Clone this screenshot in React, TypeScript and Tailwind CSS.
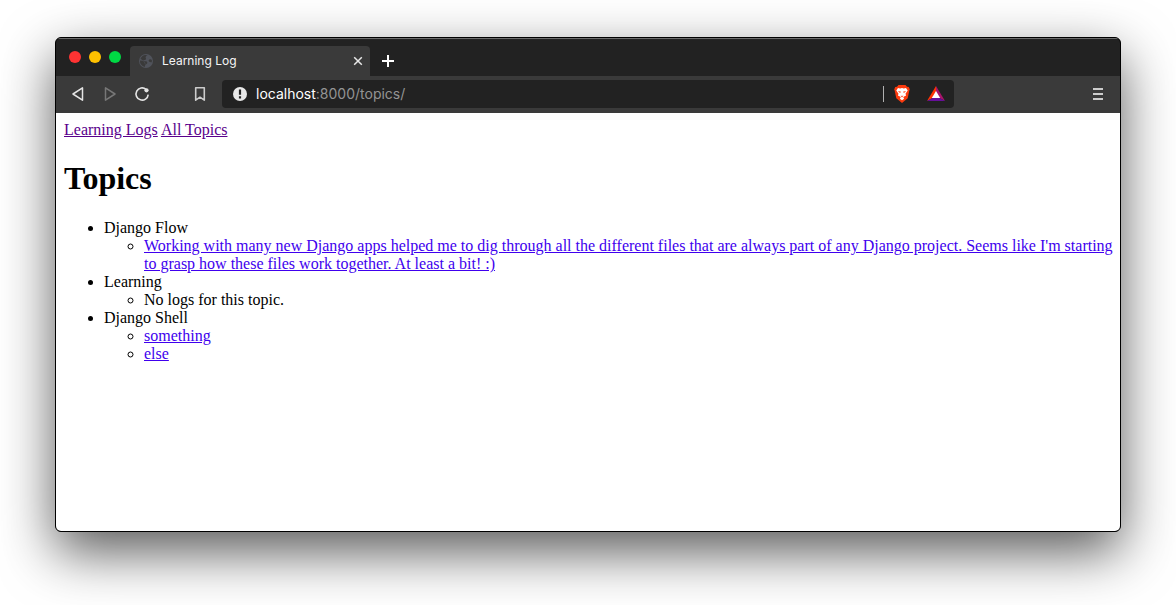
import type { ReactNode } from "react";

type Entry = { text: string; href?: string };
type Topic = { name: string; entries: Entry[] };

const topics: Topic[] = [
  {
    name: "Django Flow",
    entries: [
      {
        text: "Working with many new Django apps helped me to dig through all the different files that are always part of any Django project. Seems like I'm starting to grasp how these files work together. At least a bit! :)",
        href: "#entry-1",
      },
    ],
  },
  { name: "Learning", entries: [{ text: "No logs for this topic." }] },
  {
    name: "Django Shell",
    entries: [
      { text: "something", href: "#entry-2" },
      { text: "else", href: "#entry-3" },
    ],
  },
];

function IconButton({ label, children }: { label: string; children: ReactNode }) {
  return (
    <button type="button" aria-label={label} className="flex size-4 shrink-0 items-center justify-center">
      {children}
    </button>
  );
}

function TabStrip() {
  return (
    <div className="flex h-[38px] items-end bg-[#222222] shadow-[inset_0_1px_0_#6b6b6b]">
      <div className="flex items-center gap-2 self-center pl-[13px] pr-[9px]">
        <button type="button" aria-label="Close window" className="size-3 rounded-full bg-[#ff3333]" />
        <button type="button" aria-label="Minimize window" className="size-3 rounded-full bg-[#ffc100]" />
        <button type="button" aria-label="Zoom window" className="size-3 rounded-full bg-[#00d944]" />
      </div>
      <div className="flex h-[30px] w-60 items-center rounded-t bg-[#3a3a3a] pl-2 pr-1">
        <svg viewBox="0 0 16 16" className="size-4" aria-hidden="true">
          <circle cx="8" cy="8" r="7" fill="#50535b" />
          <path
            d="M9.500 2.200C8 3 7.300 3.800 7.800 5c.6 1 .2 1.700-1 2-1.500.2-2 .8-1.200 1.300H8c1 .2 1.500.9 1.300 1.800-.2.9-1.200 1.100-1.800 1.500-.5.500-.3 1.500-.8 2.300A6 6 0 0 1 2 7.400l2.200.3c1.300.2 2 1 2.200 2.200.1.800.8.9 1.200.6L5 7.600 2.500 5.800A6 6 0 0 1 9.500 2.200zM13.900 7c-1-1-2.600-.9-3.200.2-.3.900.4 1.500 1.200 1.700.7.200 1.300.1 1.900.4z"
            fill="#3a3a3a"
          />
        </svg>
        <span className="ml-2 flex-1 font-[Inter,sans-serif] text-xs text-[#f5f5f5]">Learning Log</span>
        <IconButton label="Close tab">
          <svg viewBox="0 0 16 16" className="size-4" stroke="#e8e8e8" strokeWidth="1.500">
            <path d="m4.200 4.200 7.600 7.600M11.800 4.200l-7.600 7.600" />
          </svg>
        </IconButton>
      </div>
      <div className="flex h-[30px] items-center pl-[10px]">
        <IconButton label="New tab">
          <svg viewBox="0 0 16 16" className="size-4" stroke="#ffffff" strokeWidth="2">
            <path d="M8 2v12M2 8h12" />
          </svg>
        </IconButton>
      </div>
    </div>
  );
}

function AddressBar() {
  return (
    <div className="flex h-7 min-w-0 flex-1 items-center rounded bg-[#222222] px-[9px]">
      <svg viewBox="0 0 16 16" className="ml-px size-4 shrink-0" aria-hidden="true">
        <circle cx="8" cy="8" r="7" fill="#e8e8e8" />
        <path d="M6.900 3.600h2.200v5.200H6.900zM6.900 10.200h2.200v2.200H6.900z" fill="#222222" />
      </svg>
      <p className="min-w-0 flex-1 truncate pl-2 font-[Inter,sans-serif] text-sm leading-5 text-[#949494]">
        <span className="text-white">localhost</span>:8000/topics/
      </p>
      <div className="h-4 w-px bg-[#b0b0b0]" />
      <div className="flex items-center gap-4 pl-[9px]">
        <button type="button" aria-label="Brave Shields" className="flex size-[18px] items-center justify-center">
          <svg viewBox="0 0 18 18" className="size-[18px]">
            <path d="M5.500 0h7L14 1.700l1.800.2 1 2.600-.5 1.300-1.600 7.400L9 18l-5.700-4.800-1.600-7.400-.5-1.300 1-2.600L4 1.700z" fill="#fb3a0e" />
            <path d="m5 3 2.200.5L9 3l1.800.5L13 3l1.700 2.500-2.200 3.200.6 1.700-2.500 1.300-.2 1 .8 1L9 15.300l-2.200-1.600.8-1-.2-1-2.500-1.300.6-1.700-2.200-3.200z" fill="#ffffff" />
            <path d="m4.800 6.200 3 .3-.6 1.600zM13.200 6.200l-3 .3.6 1.600zM7.600 10.400l1.400.7 1.400-.7-1.400 2z" fill="#fb3a0e" />
          </svg>
        </button>
        <button type="button" aria-label="Brave Rewards" className="flex size-[18px] items-center justify-center">
          <svg viewBox="0 0 18 18" className="size-[18px]">
            <path d="M9 1 0 16l5.500-3L9 7z" fill="#ff3300" />
            <path d="m9 1 9 15-5.500-3L9 7z" fill="#a8146a" />
            <path d="M0 16h18l-5.500-3h-7z" fill="#66109a" />
            <path d="m9 6 4.200 7H4.800z" fill="#ffffff" />
          </svg>
        </button>
      </div>
    </div>
  );
}

function Toolbar() {
  return (
    <div className="flex h-[37px] items-center bg-[#3a3a3a] pb-px">
      <div className="flex w-[166px] shrink-0 items-center pl-[14px]">
        <div className="flex gap-4">
          <IconButton label="Back">
            <svg viewBox="0 0 16 16" className="size-4" fill="none" stroke="#e4e4e4" strokeWidth="1.500" strokeLinejoin="round">
              <path d="M12.500 1.800v12.400L3 8z" />
            </svg>
          </IconButton>
          <IconButton label="Forward">
            <svg viewBox="0 0 16 16" className="size-4" fill="none" stroke="#777777" strokeWidth="1.500" strokeLinejoin="round">
              <path d="M3.500 1.800v12.400L13 8z" />
            </svg>
          </IconButton>
          <IconButton label="Reload">
            <svg viewBox="0 0 16 16" className="size-4" fill="none" stroke="#e4e4e4" strokeWidth="1.600">
              <path d="M12 3.300A6.100 6.100 0 1 0 14.200 8.600" />
              <circle cx="12.500" cy="4.300" r="2.100" fill="#e4e4e4" stroke="none" />
            </svg>
          </IconButton>
        </div>
        <div className="pl-[42px]">
          <IconButton label="Bookmark">
            <svg viewBox="0 0 16 16" className="size-4" fill="none" stroke="#cccccc" strokeWidth="1.600" strokeLinejoin="round">
              <path d="M3.700 1.700h8.600v12.500L8 11.200l-4.300 3z" />
            </svg>
          </IconButton>
        </div>
      </div>
      <AddressBar />
      <div className="flex w-[166px] shrink-0 justify-end pr-[14px]">
        <IconButton label="Menu">
          <svg viewBox="0 0 16 16" className="size-4" fill="#cccccc">
            <path d="M3 2h10v2H3zM3 7h10v2H3zM3 12h10v2H3z" />
          </svg>
        </IconButton>
      </div>
    </div>
  );
}

function TopicsPage() {
  return (
    <main className="flex-1 bg-white py-2 pl-2 pr-1 font-['Liberation_Serif',serif] text-base leading-[18px] text-black">
      <nav>
        <a href="#home" className="text-[#5a008c] underline">Learning Logs</a>{" "}
        <a href="#topics" className="text-[#5a008c] underline">All Topics</a>
      </nav>
      <h1 className="mt-[21px] mb-[22px] text-[32px] leading-[37px] font-bold">Topics</h1>
      <ul className="list-disc pl-10">
        {topics.map((topic) => (
          <li key={topic.name}>
            {topic.name}
            <ul className="list-[circle] pl-10">
              {topic.entries.map((entry) => (
                <li key={entry.text}>
                  {entry.href ? (
                    <a href={entry.href} className="text-[#4000ee] underline">{entry.text}</a>
                  ) : (
                    entry.text
                  )}
                </li>
              ))}
            </ul>
          </li>
        ))}
      </ul>
    </main>
  );
}

export default function App() {
  return (
    <div className="flex min-h-screen flex-col overflow-hidden bg-white px-[55px] pt-[37px] pb-[73px]">
      <div className="flex flex-1 flex-col rounded-md border border-black bg-black shadow-[0_20px_54px_rgba(0,0,0,0.65)]">
        <div className="flex flex-1 flex-col overflow-hidden rounded-[5px]">
          <TabStrip />
          <Toolbar />
          <TopicsPage />
        </div>
      </div>
    </div>
  );
}
